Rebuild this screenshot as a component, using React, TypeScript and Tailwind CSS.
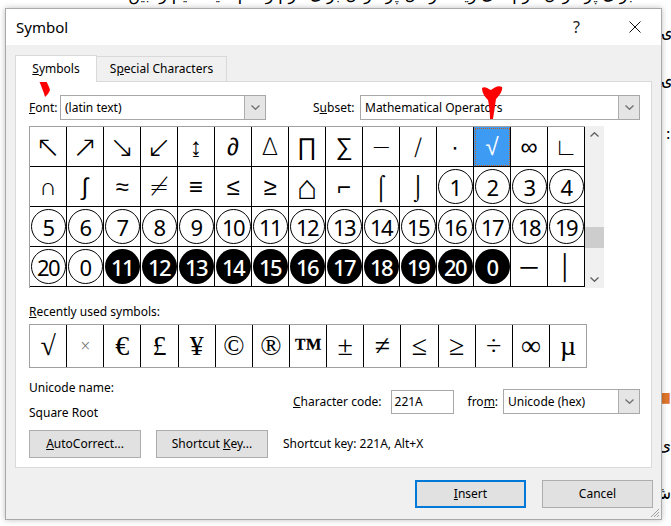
import React from 'react';

type Cell = { t: string; kind: 'sym' | 'circle' | 'dark'; size?: string };

const sym = (t: string): Cell => ({ t, kind: 'sym' });
const circ = (t: string): Cell => ({ t, kind: 'circle' });
const dark = (t: string): Cell => ({ t, kind: 'dark' });

const bigArrow = (t: string): Cell => ({ t, kind: 'sym', size: 'text-[30px]' });

const rows: Cell[][] = [
  [
    ...['↖', '↗', '↘', '↙'].map(bigArrow),
    ...['↨', '∂', '∆', '∏', '∑', '−', '∕', '∙', '√', '∞', '∟'].map(sym),
  ],
  [
    ...['∩', '∫', '≈', '≠', '≡', '≤', '≥'].map(sym),
    { t: '⌂', kind: 'sym', size: 'text-[34px]' },
    ...['⌐', '⌠', '⌡'].map(sym),
    circ('1'), circ('2'), circ('3'), circ('4'),
  ],
  ['5', '6', '7', '8', '9', '10', '11', '12', '13', '14', '15', '16', '17', '18', '19'].map(circ),
  [
    circ('20'), circ('0'),
    ...['11', '12', '13', '14', '15', '16', '17', '18', '19', '20', '0'].map(dark),
    sym('─'), sym('│'),
  ],
];

const recent = ['√', '×', '€', '£', '¥', '©', '®', '™', '±', '≠', '≤', '≥', '÷', '∞', 'µ'];

// bits of the document that peek out on the right of the dialog
const edgeBits = [
  { mt: 'mt-[14px]', t: 'ۍ' },
  { mt: 'mt-[28px]', t: 'ۍ' },
  { mt: 'mt-[34px]', t: ':' },
  { mt: 'mt-[243px]', t: '■', orange: true },
  { mt: 'mt-[29px]', t: 'ى' },
  { mt: 'mt-[28px]', t: 'ش' },
];

const Chevron = ({ up = false, color = '#606060' }: { up?: boolean; color?: string }) => (
  <svg width="9" height="5" viewBox="0 0 9 5">
    <path
      d={up ? 'M0.5 4.5 L4.5 0.7 L8.5 4.5' : 'M0.5 0.5 L4.5 4.3 L8.5 0.5'}
      stroke={color}
      strokeWidth="1.3"
      fill="none"
    />
  </svg>
);

const Combo = ({ text, width }: { text: string; width: string }) => (
  <div className={`${width} h-[25px] flex border border-[#a8a8a8] bg-white`}>
    <div className="flex-1 pl-[4px] text-[12px] leading-[23px] text-black truncate">{text}</div>
    <div className="w-[21px] bg-[#e5e5e5] border-l border-[#adadad] flex items-center justify-center">
      <Chevron color="#707070" />
    </div>
  </div>
);

const GridCell = ({ cell, selected }: { cell: Cell; selected: boolean }) => {
  let inner: React.ReactNode;
  if (cell.kind === 'circle') {
    inner = (
      <div className="w-[35px] h-[35px] rounded-full border-[1.4px] border-black flex items-center justify-center text-[22px] leading-none tracking-[-1.5px] text-black">
        {cell.t}
      </div>
    );
  } else if (cell.kind === 'dark') {
    inner = (
      <div className="w-[35px] h-[35px] rounded-full bg-black flex items-center justify-center text-[22px] leading-none tracking-[-1.5px] text-white font-medium">
        {cell.t}
      </div>
    );
  } else {
    inner = (
      <span
        className={`${cell.size ?? 'text-[24px]'} leading-none font-['DejaVu_Sans',sans-serif] font-light ${
          selected ? 'text-white' : 'text-black'
        }`}
      >
        {cell.t}
      </span>
    );
  }
  return (
    <div
      className={`w-[37px] h-[40px] border-r border-b border-black flex items-center justify-center overflow-hidden ${
        selected ? 'bg-[#3d9bf4] outline-dotted outline-1 -outline-offset-2 outline-[#c0601c]' : 'bg-white'
      }`}
    >
      {inner}
    </div>
  );
};

const RedMarks = () => (
  <svg className="absolute left-0 top-0 pointer-events-none" width="671" height="526">
    <path
      d="M36 73 C39 71 43 72 44 76 C46 81 49 86 50 90 C49 93 47 95 45 97 C44 93 42 88 40 83 C38 79 36 76 36 73 Z"
      fill="#ff0000"
    />
    <path
      d="M482 88 C485 86 488 89 491 90 C494 88 498 85 502 87 C503 90 500 95 496 99 C495 106 494 112 493 119 L490 119 C490 112 489 105 488 100 C485 97 482 93 482 88 Z"
      fill="#ff0000"
    />
  </svg>
);

export default function App() {
  return (
    <div className="relative w-[671px] h-[526px] bg-white overflow-hidden font-['Noto_Sans',sans-serif] text-black">
      {/* document behind the dialog */}
      <div className="flex flex-col h-full font-['DejaVu_Sans',sans-serif] text-[16px]">
        <div className="h-[8px] overflow-hidden">
          <div dir="rtl" className="-mt-[15px] pr-[38px] leading-[20px] whitespace-nowrap">
            برای پر کردن فرم های زیاد . زمان پر کردن برای فرم را کم کنید . تیم را بین
          </div>
        </div>
        <div className="flex-1 flex">
          <div className="w-[662px]" />
          <div className="w-[9px] flex flex-col">
            {edgeBits.map((b, i) => (
              <div
                key={i}
                dir="rtl"
                className={`${b.mt} h-[20px] leading-[20px] overflow-hidden whitespace-nowrap ${
                  b.orange ? 'text-[#e0762b] text-[14px]' : ''
                }`}
              >
                {b.t}
              </div>
            ))}
          </div>
        </div>
      </div>

      {/* dialog window */}
      <div className="absolute left-[5px] top-[8px] w-[657px] h-[512px] bg-[#f0f0f0] border border-[#a9a9a9] shadow-[0_0_6px_rgba(0,0,0,0.25)] flex flex-col">
        <div className="h-[36px] bg-white flex items-center pl-[10px] pr-[20px]">
          <span className="text-[15px] leading-none text-black">Symbol</span>
          <span className="ml-auto text-[16px] leading-none text-[#222] mr-[49px]">?</span>
          <svg width="12" height="12" viewBox="0 0 12 12">
            <path d="M0.5 0.5 L11.5 11.5 M11.5 0.5 L0.5 11.5" stroke="#111" strokeWidth="1" />
          </svg>
        </div>

        {/* tabs */}
        <div className="h-[36px] flex items-end pl-[9px]">
          <div className="relative z-10 -mb-px w-[82px] h-[27px] bg-white border border-b-0 border-[#d9d9d9] flex items-center justify-center text-[12px]">
            <span>
              <span className="underline">S</span>ymbols
            </span>
          </div>
          <div className="w-[130px] h-[25px] bg-[#f0f0f0] border border-l-0 border-b-0 border-[#d9d9d9] flex items-center justify-center text-[12px]">
            <span>
              S<span className="underline">p</span>ecial Characters
            </span>
          </div>
        </div>

        {/* tab panel */}
        <div className="mx-[9px] h-[387px] bg-white border border-[#d9d9d9] pl-[13px] pt-[13px] flex flex-col">
          <div className="flex items-center h-[25px] text-[12px]">
            <span className="w-[31px]">
              <span className="underline">F</span>ont:
            </span>
            <Combo text="(latin text)" width="w-[206px]" />
            <span className="ml-[47px] w-[47px]">
              S<span className="underline">u</span>bset:
            </span>
            <Combo text="Mathematical Operators" width="w-[280px]" />
          </div>

          <div className="mt-[6px] flex">
            <div className="border-t border-l border-[#a0a0a0]">
              {rows.map((row, ri) => (
                <div key={ri} className="flex">
                  {row.map((c, ci) => (
                    <GridCell key={ci} cell={c} selected={ri === 0 && ci === 12} />
                  ))}
                </div>
              ))}
            </div>
            <div className="w-[19px] h-[162px] bg-[#f0f0f0] flex flex-col items-center">
              <div className="h-[17px] flex items-center">
                <Chevron up />
              </div>
              <div className="mt-[84px] w-full h-[21px] bg-[#cdcdcd]" />
              <div className="mt-auto h-[17px] flex items-center">
                <Chevron />
              </div>
            </div>
          </div>

          <div className="mt-[16px] text-[12px] leading-[16px]">
            <span className="underline">R</span>ecently used symbols:
          </div>
          <div className="mt-[4px] w-[558px] h-[44px] border border-[#a0a0a0] flex font-['Liberation_Serif','DejaVu_Serif',serif]">
            {recent.map((s, i) => (
              <div
                key={i}
                className={`flex-1 flex items-center justify-center ${i > 0 ? 'border-l border-black' : ''} ${
                  s === '×' ? 'text-[18px] text-[#777]' : s === '™' ? 'text-[28px] font-bold items-start pt-[2px]' : 'text-[28px]'
                }`}
              >
                {s}
              </div>
            ))}
          </div>

          <div className="mt-[7px] flex items-start text-[12px]">
            <div className="w-[264px]">
              <div className="h-[25px] leading-[25px]">Unicode name:</div>
              <div className="h-[25px] leading-[25px]">Square Root</div>
            </div>
            <div className="mt-[14px] flex items-center">
              <span>
                <span className="underline">C</span>haracter code:
              </span>
              <div className="ml-[9px] w-[63px] h-[24px] border border-[#a8a8a8] bg-white pl-[3px] leading-[22px]">
                221A
              </div>
              <span className="ml-[14px]">
                fro<span className="underline">m</span>:
              </span>
              <div className="ml-[5px]">
                <Combo text="Unicode (hex)" width="w-[137px]" />
              </div>
            </div>
          </div>

          <div className="mt-[5px] flex items-center text-[12px]">
            <div className="w-[112px] h-[28px] bg-[#e1e1e1] border border-[#adadad] flex items-center justify-center">
              <span>
                <span className="underline">A</span>utoCorrect...
              </span>
            </div>
            <div className="ml-[15px] w-[112px] h-[28px] bg-[#e1e1e1] border border-[#adadad] flex items-center justify-center">
              <span>
                Shortcut <span className="underline">K</span>ey...
              </span>
            </div>
            <span className="ml-[15px]">Shortcut key: 221A, Alt+X</span>
          </div>
        </div>

        {/* bottom buttons */}
        <div className="flex-1 flex items-start pt-[12px] pl-[409px] text-[12px] relative">
          <div className="w-[111px] h-[28px] bg-[#e1e1e1] border-2 border-[#0078d7] flex items-center justify-center">
            <span>
              <span className="underline">I</span>nsert
            </span>
          </div>
          <div className="ml-[16px] w-[111px] h-[28px] bg-[#e1e1e1] border border-[#adadad] flex items-center justify-center">
            Cancel
          </div>
          <svg className="absolute right-[1px] bottom-[1px]" width="11" height="11" viewBox="0 0 11 11">
            <path d="M10 2 L2 10 M10 5 L5 10 M10 8 L8 10" stroke="#a0a0a0" strokeWidth="1" />
          </svg>
        </div>
      </div>

      <RedMarks />
    </div>
  );
}
